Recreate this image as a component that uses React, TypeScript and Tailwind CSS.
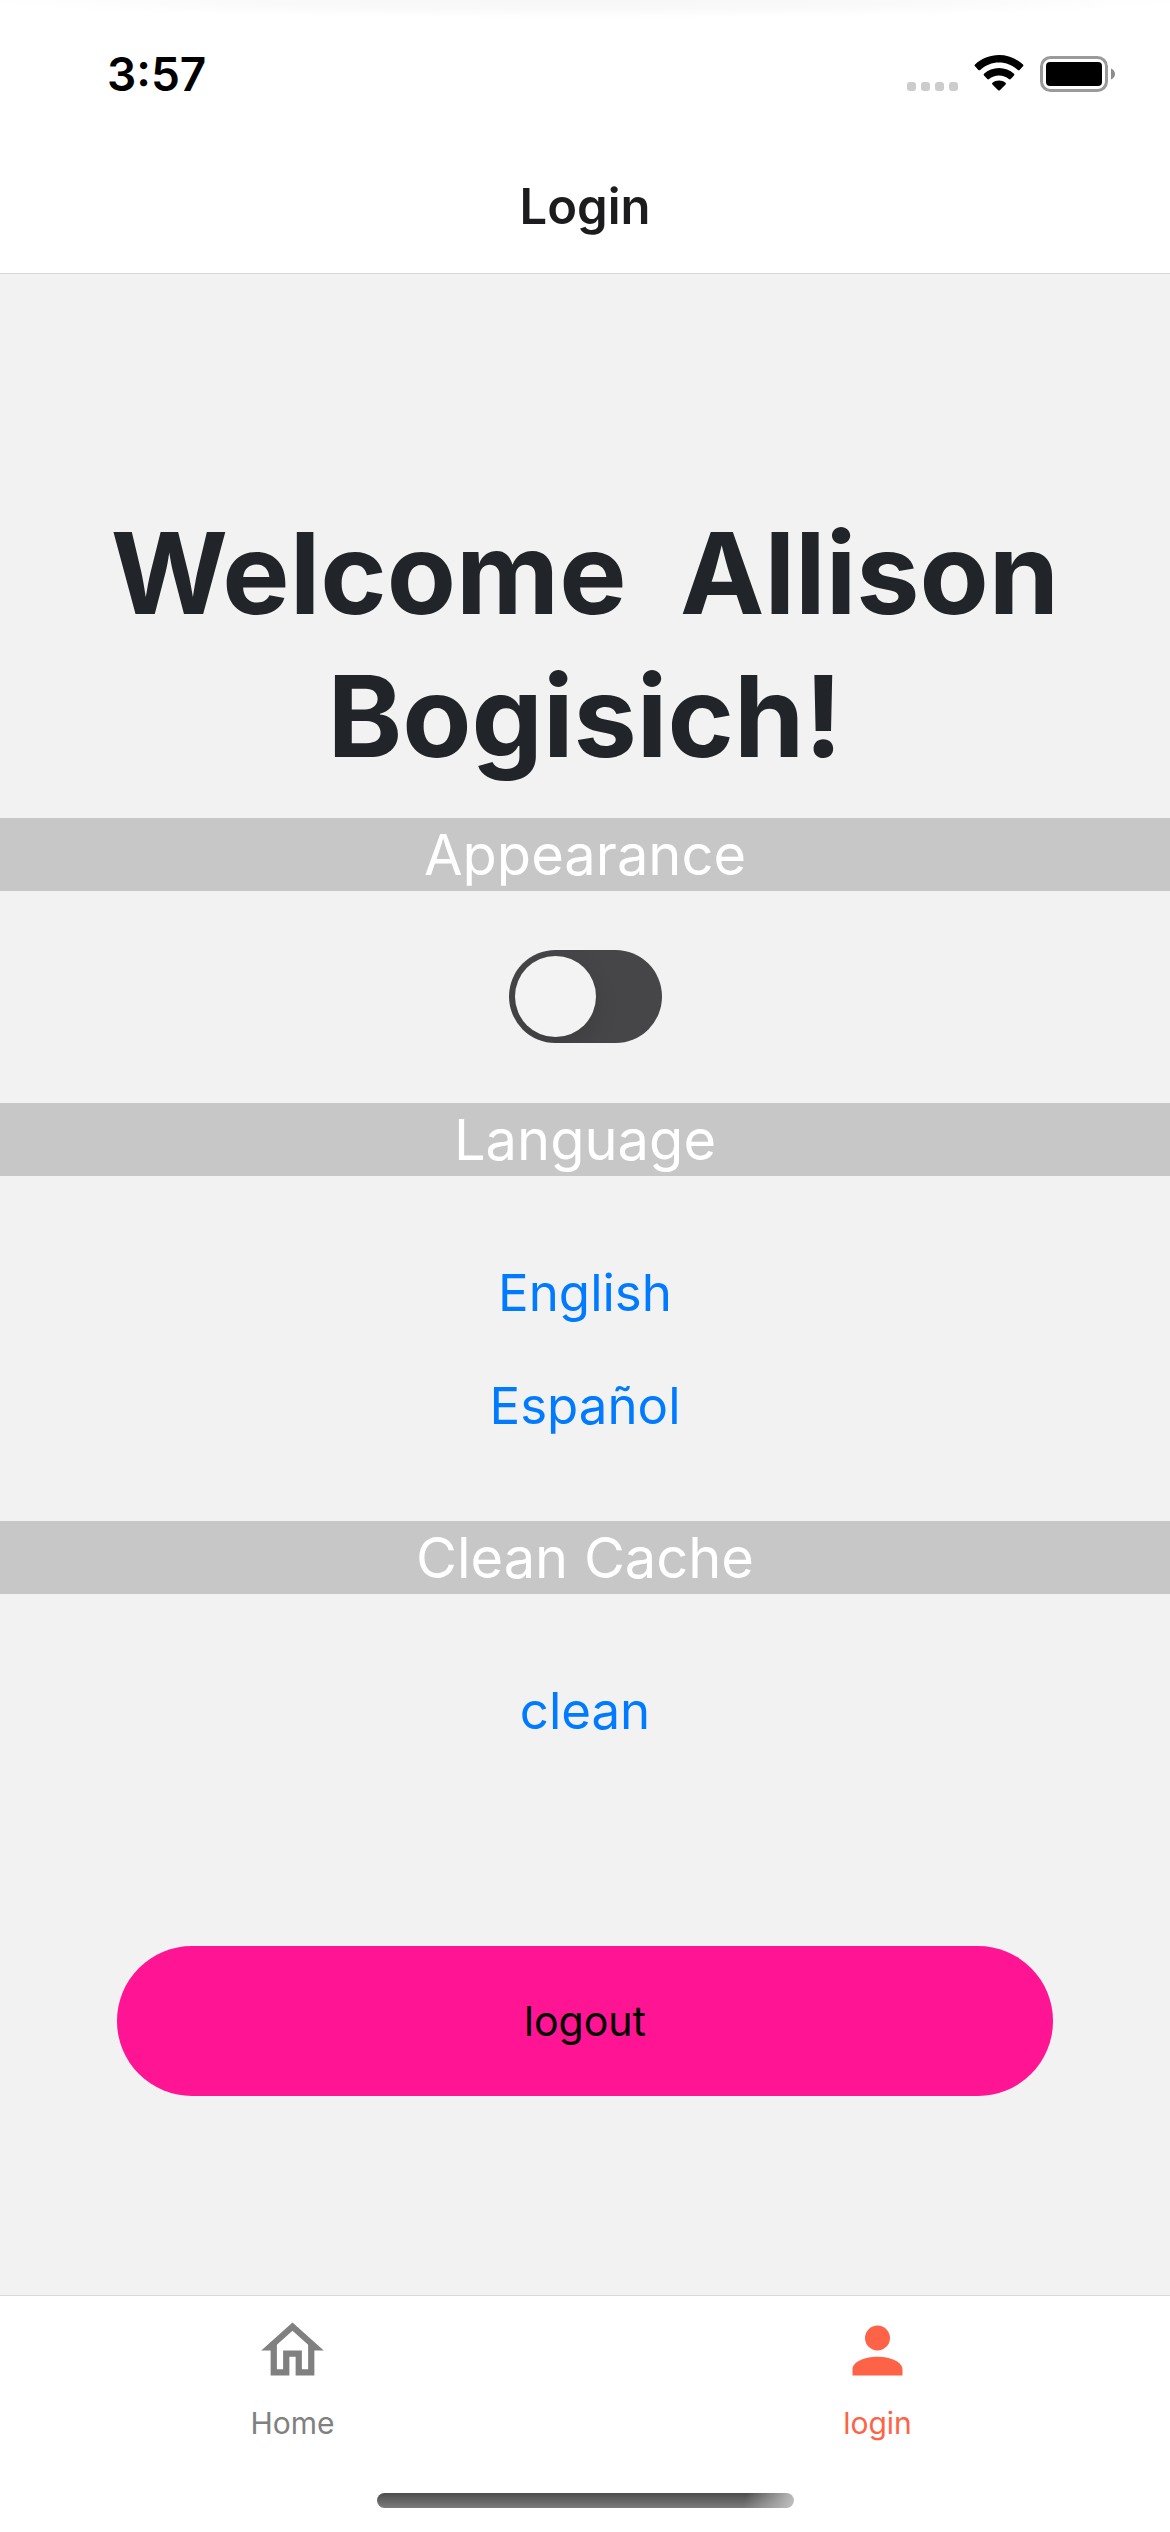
import { useState } from "react";
import type { ReactNode } from "react";

function StatusBar() {
  return (
    <div className="flex h-[141px] items-start justify-between bg-[radial-gradient(52%_18px_at_50%_0,#f7f7f7_0%,#f9f9f9_50%,#ffffff_100%)] pt-[45px] pr-[54px] pl-[107px]">
      <time className="text-[46px] leading-[58px] font-semibold text-black">3:57</time>
      <svg
        className="mt-[10px] h-[38px] w-[210px]"
        viewBox="0 0 210 38"
        role="img"
        aria-label="No cellular signal, Wi-Fi connected, battery full"
      >
        <g fill="#cccccc">
          <rect x="1" y="27" width="9" height="9" rx="3" />
          <rect x="15" y="27" width="9" height="9" rx="3" />
          <rect x="29" y="27" width="9" height="9" rx="3" />
          <rect x="43" y="27" width="9" height="9" rx="3" />
        </g>
        <path d="M93 0C102 0 110.500 3.500 117 9.500Q117.800 10.400 117 11.300L113.600 14.900Q112.700 15.800 111.800 14.900C106.500 10.200 100 7.600 93 7.600S79.500 10.200 74.200 14.900Q73.300 15.800 72.400 14.900L69 11.300Q68.200 10.400 69 9.500C75.500 3.500 84 0 93 0Z" />
        <path d="M93 13C98.700 13 104 15.200 108 18.800Q108.800 19.700 108 20.600L104.700 24Q103.800 24.900 102.900 24.100C100.200 21.800 96.700 20.500 93 20.500S85.800 21.800 83.100 24.100Q82.200 24.900 81.300 24L78 20.600Q77.200 19.700 78 18.800C82 15.200 87.300 13 93 13Z" />
        <path d="M93 25.500C95.400 25.500 97.700 26.300 99.500 27.700Q100.400 28.500 99.600 29.400L93.800 35.200Q93 36 92.200 35.200L86.400 29.400Q85.600 28.500 86.500 27.700C88.300 26.300 90.600 25.500 93 25.500Z" />
        <rect x="135.500" y="2.500" width="65" height="33" rx="9" fill="none" stroke="#9a9a9a" strokeWidth="3" />
        <rect x="140" y="7" width="56" height="24" rx="4" />
        <path d="M205 13.500C207.500 14.500 209 16.700 209 19S207.500 23.500 205 24.500Z" fill="#8c8c8c" />
      </svg>
    </div>
  );
}

function SectionTitle({ children }: { children: ReactNode }) {
  return (
    <h3 className="bg-[#c7c7c7] pt-px text-center text-[56px] leading-[72px] text-white">{children}</h3>
  );
}

function LinkButton({ children }: { children: ReactNode }) {
  return (
    <button type="button" className="h-[113px] px-6 text-[51px] leading-[64px] text-[#007aff]">
      {children}
    </button>
  );
}

function TabIcon({ path }: { path: string }) {
  return (
    <svg className="size-[75px]" viewBox="0 0 24 24" fill="currentColor" aria-hidden="true">
      <path d={path} />
    </svg>
  );
}

const HOME =
  "M12 5.690L17 10.190V18H15V12H9V18H7V10.190L12 5.690M12 3L2 12H5V20H11V14H13V20H19V12H22";
const ACCOUNT =
  "M12 4A4 4 0 0 1 16 8A4 4 0 0 1 12 12A4 4 0 0 1 8 8A4 4 0 0 1 12 4M12 14C16.420 14 20 15.790 20 18V20H4V18C4 15.790 7.580 14 12 14Z";

export default function App() {
  const [dark, setDark] = useState(false);

  return (
    <div className="flex min-h-screen flex-col bg-[#f2f2f2] font-['Inter',sans-serif]">
      <header className="border-b border-[#d8d8d8] bg-white">
        <StatusBar />
        <h1 className="h-[132px] pt-9 text-center text-[49px] leading-[60px] font-semibold text-[#1c1c1e]">
          Login
        </h1>
      </header>

      <main className="flex-1 pt-[228px] pb-12">
        <h2 className="mb-[30px] text-center text-[113px] leading-[143px] font-bold text-[#212529]">
          Welcome&nbsp; Allison
          <br />
          Bogisich!
        </h2>

        <SectionTitle>Appearance</SectionTitle>
        <div className="flex justify-center pt-[59px] pb-[60px]">
          <label className="flex h-[93px] w-[153px] cursor-pointer items-center overflow-hidden rounded-full bg-[#464648] p-[6px]">
            <input
              type="checkbox"
              role="switch"
              aria-label="Appearance"
              checked={dark}
              onChange={(e) => setDark(e.target.checked)}
              className="peer sr-only"
            />
            <span className="size-[81px] rounded-full bg-[#f3f3f3] shadow-[0_9px_24px_rgba(0,0,0,0.12)] peer-checked:ml-auto" />
          </label>
        </div>

        <SectionTitle>Language</SectionTitle>
        <div className="flex flex-col items-center pt-[60px] pb-[59px]">
          <LinkButton>English</LinkButton>
          <LinkButton>Español</LinkButton>
        </div>

        <SectionTitle>Clean Cache</SectionTitle>
        <div className="flex flex-col items-center pt-[60px] pb-[59px]">
          <LinkButton>clean</LinkButton>
        </div>

        <button
          type="button"
          className="mx-auto mt-[120px] block h-[150px] w-4/5 rounded-full bg-[#ff1493] text-[41px] leading-[50px] text-black"
        >
          logout
        </button>
      </main>

      <footer className="border-t border-[#d8d8d8] bg-white">
        <nav className="grid grid-cols-2 pt-[17px] text-[30px] leading-[36px]">
          <a href="#home" className="flex flex-col items-center gap-[17px] text-[#808080]">
            <TabIcon path={HOME} />
            Home
          </a>
          <a
            href="#login"
            aria-current="page"
            className="flex flex-col items-center gap-[17px] text-[#ff6347]"
          >
            <TabIcon path={ACCOUNT} />
            login
          </a>
        </nav>
        <div className="mx-auto mt-[52px] mb-6 h-[15px] w-[417px] rounded-full bg-[linear-gradient(100deg,transparent_88%,#c0c0c0),linear-gradient(#4c4c4c,#7c7c7c)]" />
      </footer>
    </div>
  );
}
